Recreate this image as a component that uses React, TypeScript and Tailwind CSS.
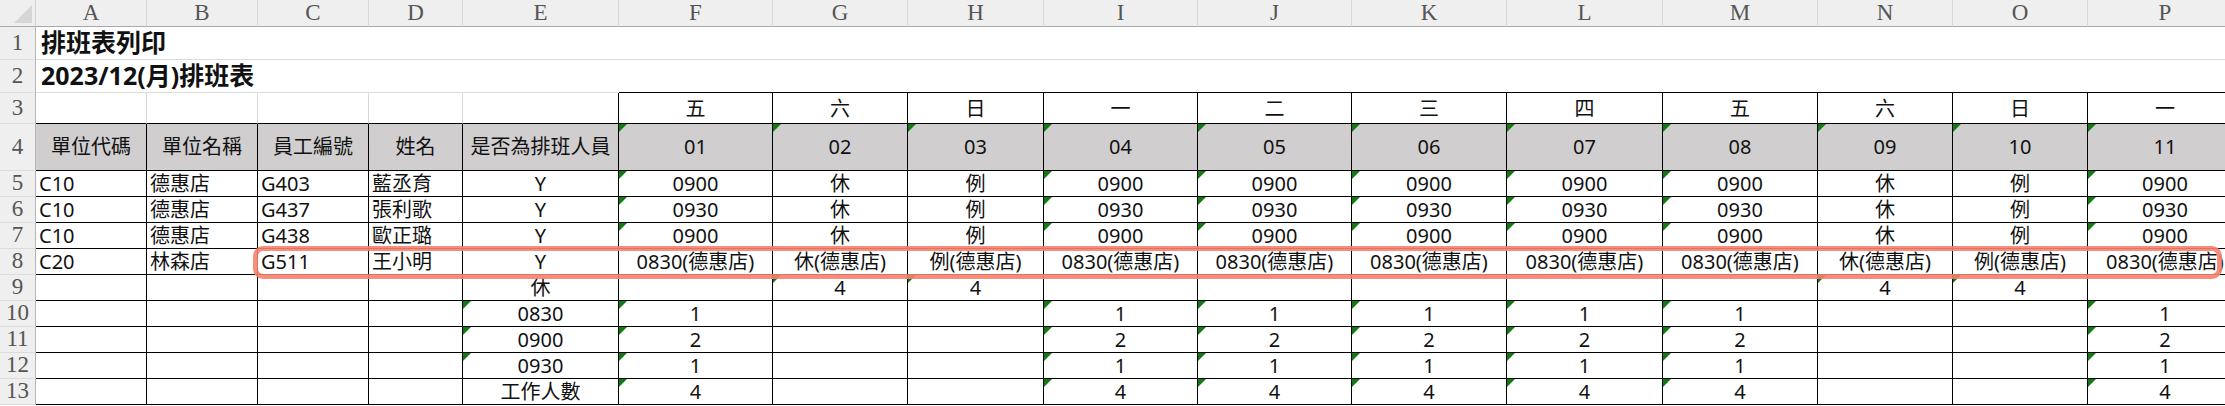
const colLetters = ["A", "B", "C", "D", "E", "F", "G", "H", "I", "J", "K", "L", "M", "N", "O", "P"];
const weekdays = ["五", "六", "日", "一", "二", "三", "四", "五", "六", "日", "一"];

const store = "(德惠店)";

// rows 4..13 of the sheet (A..P)
const body: string[][] = [
  ["單位代碼", "單位名稱", "員工編號", "姓名", "是否為排班人員", "01", "02", "03", "04", "05", "06", "07", "08", "09", "10", "11"],
  ["C10", "德惠店", "G403", "藍丞育", "Y", "0900", "休", "例", "0900", "0900", "0900", "0900", "0900", "休", "例", "0900"],
  ["C10", "德惠店", "G437", "張利歌", "Y", "0930", "休", "例", "0930", "0930", "0930", "0930", "0930", "休", "例", "0930"],
  ["C10", "德惠店", "G438", "歐正璐", "Y", "0900", "休", "例", "0900", "0900", "0900", "0900", "0900", "休", "例", "0900"],
  ["C20", "林森店", "G511", "王小明", "Y", "0830" + store, "休" + store, "例" + store, "0830" + store, "0830" + store, "0830" + store, "0830" + store, "0830" + store, "休" + store, "例" + store, "0830" + store],
  ["", "", "", "", "休", "", "4", "4", "", "", "", "", "", "4", "4", ""],
  ["", "", "", "", "0830", "1", "", "", "1", "1", "1", "1", "1", "", "", "1"],
  ["", "", "", "", "0900", "2", "", "", "2", "2", "2", "2", "2", "", "", "2"],
  ["", "", "", "", "0930", "1", "", "", "1", "1", "1", "1", "1", "", "", "1"],
  ["", "", "", "", "工作人數", "4", "", "", "4", "4", "4", "4", "4", "", "", "4"],
];

// green "number stored as text" markers, by column index
const shifts = [5, 8, 9, 10, 11, 12, 15];
const markers: number[][] = [
  [5, 6, 7, 8, 9, 10, 11, 12, 13, 14, 15],
  shifts,
  shifts,
  shifts,
  [],
  [6, 7, 13, 14],
  [4, ...shifts],
  [4, ...shifts],
  [4, ...shifts],
  shifts,
];

function Marker() {
  return (
    <span className="absolute left-0 top-0 h-0 w-0 border-t-[8px] border-r-[8px] border-t-[#127a12] border-r-transparent" />
  );
}

function RowHead({ n }: { n: number }) {
  return (
    <div className="flex items-center justify-center border-r border-b border-r-[#b4b4b4] border-b-[#dcdcdc] bg-[#efefef] font-['Liberation_Serif',serif] text-[23px] text-[#555]">
      {n}
    </div>
  );
}

export default function App() {
  return (
    <div className="relative h-[406px] w-[2225px] overflow-hidden bg-white font-['Noto_Sans','Noto_Sans_CJK_TC',sans-serif] text-[#111]">
      <div className="grid w-[2244px] grid-cols-[36px_111px_111px_111px_94px_156px_154px_135px_136px_154px_154px_155px_156px_155px_135px_135px_155px] grid-rows-[27px_33px_33px_31px_47px_repeat(9,26px)]">
        {/* column headers */}
        <div className="relative border-r border-b border-r-[#d4d4d4] border-b-[#a9a9a9] bg-[#efefef]">
          <span className="absolute right-[3px] bottom-[3px] h-0 w-0 border-b-[18px] border-l-[18px] border-b-[#d6d6d6] border-l-transparent" />
        </div>
        {colLetters.map((c) => (
          <div
            key={c}
            className="flex items-center justify-center border-r border-b border-r-[#d8d8d8] border-b-[#a9a9a9] bg-[#efefef] font-['Liberation_Serif',serif] text-[23px] text-[#555]"
          >
            {c}
          </div>
        ))}

        {/* row 1 */}
        <RowHead n={1} />
        <div className="col-span-16 flex items-center border-b border-[#dcdcdc] pl-[5px] text-[25px] font-bold">
          排班表列印
        </div>

        {/* row 2 */}
        <RowHead n={2} />
        <div className="col-span-5 flex items-center border-b border-[#dcdcdc] pl-[5px] text-[25px] font-bold">
          2023/12(月)排班表
        </div>
        <div className="col-span-11 border-b border-black" />

        {/* row 3 */}
        <RowHead n={3} />
        {[0, 1, 2, 3].map((i) => (
          <div key={i} className="border-r border-b border-r-[#d9d9d9] border-b-black" />
        ))}
        <div className="border-r border-b border-black" />
        {weekdays.map((w, i) => (
          <div key={i} className="flex items-center justify-center border-r border-b border-black pt-[2px] text-[20px]">
            {w}
          </div>
        ))}

        {/* rows 4..13 */}
        {body.map((row, r) => (
          <>
            <RowHead key={"h" + r} n={r + 4} />
            {row.map((text, c) => (
              <div
                key={r + "-" + c}
                className={
                  "relative flex items-center overflow-hidden whitespace-nowrap border-r border-b border-black text-[20px] " +
                  (r === 0 ? "bg-[#d0cece] " : "") +
                  (c < 4 && r > 0 ? "justify-start pl-[3px]" : "justify-center")
                }
              >
                {markers[r].includes(c) && <Marker />}
                {text}
              </div>
            ))}
          </>
        ))}
      </div>

      {/* hand-drawn highlight around row 8 */}
      <div className="pointer-events-none absolute left-[253px] top-[246px] h-[33px] w-[1969px] rounded-[10px] border-[5px] border-[#f6826d] opacity-90" />
    </div>
  );
}
